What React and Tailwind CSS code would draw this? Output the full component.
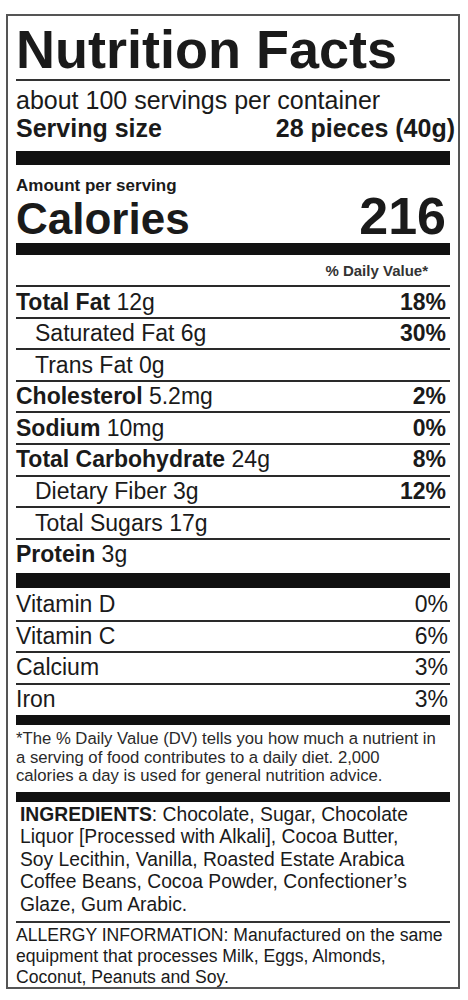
import React from 'react';

// nutrition label rows
const rows = [
  { label: 'Total Fat', amount: '12g', dv: '18%', bold: true },
  { label: 'Saturated Fat', amount: '6g', dv: '30%', sub: true },
  { label: 'Trans Fat', amount: '0g', dv: '', sub: true },
  { label: 'Cholesterol', amount: '5.2mg', dv: '2%', bold: true },
  { label: 'Sodium', amount: '10mg', dv: '0%', bold: true },
  { label: 'Total Carbohydrate', amount: '24g', dv: '8%', bold: true },
  { label: 'Dietary Fiber', amount: '3g', dv: '12%', sub: true },
  { label: 'Total Sugars', amount: '17g', dv: '', sub: true },
];

const vitamins = [
  { label: 'Vitamin C', dv: '6%' },
  { label: 'Calcium', dv: '3%' },
  { label: 'Iron', dv: '3%' },
];

const NutrientRow = ({ label, amount, dv, bold, sub }) => (
  <div className="h-[31.6px] border-t-2 border-[#2a2a2a] flex items-start justify-between pt-[1.5px] text-[23px] leading-[26px]">
    <span className={sub ? 'pl-[19px]' : ''}>
      {bold ? <span className="font-bold">{label}</span> : label} {amount}
    </span>
    <span className="font-bold pr-[4px]">{dv}</span>
  </div>
);

export default function App() {
  return (
    <div className="min-h-[1000px] bg-white pt-[14px] pl-[6px] font-['Liberation_Sans',Arial,sans-serif] text-[#1a1a1a]">
      <div className="w-[454px] h-[975px] border-2 border-[#555] px-2">
        <div className="pt-[6px] text-[54px] leading-[54px] font-bold">Nutrition Facts</div>
        <div className="mt-[3px] h-[2px] bg-[#333]" />

        <div className="mt-[5px] text-[25px] leading-[28px]">about 100 servings per container</div>
        <div className="flex justify-between text-[25px] leading-[28px] font-bold">
          <span>Serving size</span>
          <span className="mr-[-5px]">28 pieces (40g)</span>
        </div>
        <div className="mt-[9px] h-[14px] bg-[#111]" />

        <div className="mt-[14px] text-[17px] leading-[14px] font-bold">Amount per serving</div>
        <div className="flex justify-between items-baseline font-bold">
          <span className="text-[44px] leading-[46px]">Calories</span>
          <span className="text-[52px] leading-[46px] pr-[4px]">216</span>
        </div>
        <div className="mt-[1px] h-[12px] bg-[#111]" />

        <div className="mt-[7px] text-right pr-[22px] text-[15px] leading-[18px] font-bold text-[#333]">% Daily Value*</div>
        <div className="mt-[5px]">
          {rows.map((r) => (
            <NutrientRow key={r.label} {...r} />
          ))}
          <div className="h-[35px] border-t-2 border-[#2a2a2a] pt-[1px] text-[23px] leading-[26px]">
            <span className="font-bold">Protein</span> 3g
          </div>
        </div>
        <div className="h-[15px] bg-[#111]" />

        <div className="h-[32px] flex justify-between pt-[3px] text-[23px] leading-[26px]">
          <span>Vitamin D</span>
          <span className="pr-[2px]">0%</span>
        </div>
        {vitamins.map((v) => (
          <div key={v.label} className="h-[31.7px] border-t-2 border-[#2a2a2a] flex justify-between pt-[1px] text-[23px] leading-[26px]">
            <span>{v.label}</span>
            <span className="pr-[2px]">{v.dv}</span>
          </div>
        ))}
        <div className="h-[10px] bg-[#111]" />

        <div className="mt-[5.5px] text-[16.7px] leading-[18.5px] text-[#2a2a2a] whitespace-nowrap">
          *The % Daily Value (DV) tells you how much a nutrient in
          <br />a serving of food contributes to a daily diet. 2,000
          <br />calories a day is used for general nutrition advice.
        </div>
        <div className="mt-[6px] h-[10px] bg-[#111]" />

        <div className="mt-[2px] pl-[4px] text-[19.3px] leading-[22.5px] whitespace-nowrap">
          <span className="font-bold">INGREDIENTS</span>: Chocolate, Sugar, Chocolate
          <br />Liquor [Processed with Alkali], Cocoa Butter,
          <br />Soy Lecithin, Vanilla, Roasted Estate Arabica
          <br />Coffee Beans, Cocoa Powder, Confectioner’s
          <br />Glaze, Gum Arabic.
        </div>
        <div className="mt-[4.5px] h-[2px] bg-[#333]" />

        <div className="mt-[2px] text-[17.6px] leading-[21px] whitespace-nowrap">
          ALLERGY INFORMATION: Manufactured on the same
          <br />equipment that processes Milk, Eggs, Almonds,
          <br />Coconut, Peanuts and Soy.
        </div>
      </div>
    </div>
  );
}
